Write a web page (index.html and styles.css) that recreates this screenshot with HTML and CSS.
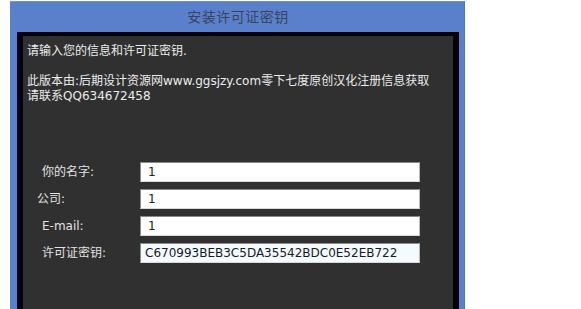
FILE: index.html
```html
<!DOCTYPE html>
<html lang="zh-CN">
<head>
<meta charset="utf-8">
<title>安装许可证密钥</title>
<link rel="stylesheet" href="styles.css">
</head>
<body>
<div class="window">
  <div class="titlebar">安装许可证密钥</div>
  <div class="frame">
    <div class="content">
      <p class="intro">请输入您的信息和许可证密钥.</p>
      <p class="note">此版本由:后期设计资源网www.ggsjzy.com零下七度原创汉化注册信息获取<br>请联系QQ634672458</p>
      <div class="form">
        <label class="label">你的名字:</label>
        <div class="field">1</div>
        <label class="label label-shift">公司:</label>
        <div class="field">1</div>
        <label class="label">E-mail:</label>
        <div class="field">1</div>
        <label class="label">许可证密钥:</label>
        <div class="field field-focus">C670993BEB3C5DA35542BDC0E52EB722</div>
      </div>
    </div>
  </div>
</div>
</body>
</html>
```

FILE: styles.css
```css
html, body {
  margin: 0;
  padding: 0;
  background: #ffffff;
}
body {
  width: 581px;
  height: 309px;
  overflow: hidden;
  font-family: "DejaVu Sans", "Noto Sans CJK SC", sans-serif;
  font-size: 12px;
}
.window {
  margin: 1px 0 0 10px;
  width: 455px;
  height: 308px;
  box-sizing: border-box;
  background: #5b80cb;
  border-top: 1px solid #6f90d4;
  border-right: 1px solid #4f72bb;
  padding: 0 5px 0 7px;
  display: flex;
  flex-direction: column;
}
.titlebar {
  height: 30px;
  line-height: 29px;
  text-align: center;
  font-family: "Noto Sans CJK SC", sans-serif;
  font-size: 14px;
  color: #38445e;
  letter-spacing: 0.5px;
}
.frame {
  flex: 1;
  background: #02030c;
  padding: 4px 6px 0 6px;
  display: flex;
}
.content {
  flex: 1;
  background: #303030;
  padding: 8px 0 0 4px;
  color: #ececec;
  line-height: 15px;
}
.intro {
  margin: 0 0 15px 0;
}
.note {
  margin: 0;
}
.form {
  display: grid;
  grid-template-columns: 113px 280px;
  row-gap: 7px;
  margin-top: 58px;
  align-items: center;
}
.label {
  padding-left: 15px;
  color: #e2e2e2;
  line-height: 20px;
}
.label-shift {
  padding-left: 10px;
}
.field {
  height: 20px;
  box-sizing: border-box;
  background: #ffffff;
  border-top: 1px solid #8a8a8a;
  border-left: 1px solid #8a8a8a;
  border-right: 1px solid #b8b8b8;
  border-bottom: 1px solid #d8d8d8;
  color: #222222;
  padding-left: 7px;
  line-height: 18px;
  font-size: 12px;
}
.field-focus {
  background: #f3fbff;
  padding-left: 4px;
  color: #1a1a1a;
}
```
